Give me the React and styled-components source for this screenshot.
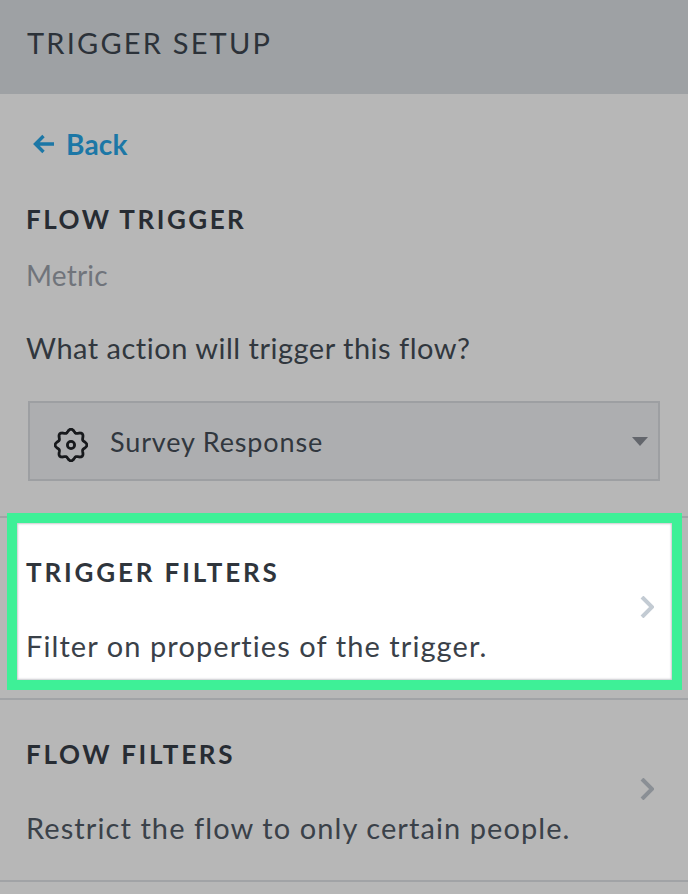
import React from "react";
import styled, { createGlobalStyle } from "styled-components";

const GlobalStyle = createGlobalStyle`
  html, body {
    margin: 0;
    padding: 0;
    background: #b7b7b7;
  }
  body {
    font-family: "Lato", "Open Sans", sans-serif;
    color: #2c3239;
  }
`;

const Page = styled.div`
  width: 688px;
  height: 894px;
  overflow: hidden;
  background: #b7b7b7;
`;

const Header = styled.header`
  height: 94px;
  background: #9ea1a4;
  display: flex;
  align-items: center;
  padding: 0 27px 9px;
  box-sizing: border-box;
  font-size: 29px;
  letter-spacing: 2.2px;
  color: #2c3239;
`;

const Top = styled.section`
  height: 422px;
  padding: 33px 28px 0 26px;
  box-sizing: border-box;
`;

const BackLink = styled.a`
  display: flex;
  align-items: center;
  gap: 11px;
  height: 34px;
  padding-left: 7px;
  font-size: 28px;
  font-weight: 700;
  letter-spacing: 0.2px;
  color: #1c77a6;
`;

const SectionTitle = styled.h2`
  margin: 0;
  font-size: 26px;
  line-height: 34px;
  font-weight: 700;
  letter-spacing: ${(p) => p.$spacing || 2.5}px;
  color: ${(p) => p.$color || "#272c33"};
`;

const FlowTitle = styled(SectionTitle)`
  margin-top: 41px;
`;

const Muted = styled.div`
  margin-top: 22px;
  font-size: 28px;
  line-height: 34px;
  letter-spacing: 0.2px;
  color: #70747b;
`;

const Question = styled.div`
  margin-top: 39px;
  font-size: 29px;
  line-height: 34px;
  letter-spacing: 0.5px;
  color: #31373e;
`;

const Select = styled.div`
  margin: 36px 0 0 2px;
  height: 80px;
  width: 632px;
  box-sizing: border-box;
  border: 2px solid #9d9fa2;
  background: #adaeb0;
  display: flex;
  align-items: center;
  padding: 0 10px 0 24px;
  font-size: 27px;
  letter-spacing: 0.85px;
  color: #31373e;
`;

const SelectLabel = styled.span`
  flex: 1;
  margin-left: 22px;
`;

const Caret = styled.span`
  width: 0;
  height: 0;
  border-left: 8px solid transparent;
  border-right: 8px solid transparent;
  border-top: 9px solid #63666c;
`;

const Row = styled.div`
  position: relative;
  height: 182px;
  box-sizing: border-box;
  border-top: 2px solid #a1a3a6;
  display: flex;
  align-items: center;
  justify-content: space-between;
  padding: 0 34px 2px 26px;
`;

const LastRow = styled(Row)`
  border-bottom: 2px solid #a1a3a6;
  height: 184px;
`;

const Highlight = styled.div`
  position: absolute;
  left: 7px;
  right: 6px;
  top: -5px;
  height: 177px;
  box-sizing: border-box;
  border: 10px solid #3ef097;
  background: #fff;
  box-shadow: inset 0 0 2px 1px #c9c9cf;
`;

const RowText = styled.div`
  position: relative;
  display: flex;
  flex-direction: column;
  gap: 40px;
  margin-top: 3px;
`;

const RowDescription = styled.div`
  font-size: 29px;
  line-height: 34px;
  letter-spacing: 1.08px;
  color: #3a4149;
`;

const Chevron = styled.svg`
  position: relative;
  width: 14px;
  height: 22px;
  fill: none;
  stroke: ${(p) => p.$color};
  stroke-width: 4;
`;

const GearSvg = styled.svg`
  margin-top: 8px;
  flex: none;
`;

// eight soft lobes round the outline of the gear
const gearPath = () => {
  const points = [];
  for (let i = 0; i < 96; i++) {
    const angle = (i / 96) * Math.PI * 2;
    const radius = 14.3 + 1.6 * Math.cos(angle * 8);
    points.push(`${(17 + radius * Math.sin(angle)).toFixed(2)} ${(17 - radius * Math.cos(angle)).toFixed(2)}`);
  }
  return `M${points.join("L")}Z`;
};

const GearIcon = () => (
  <GearSvg width="34" height="34" viewBox="0 0 34 34" fill="none" stroke="#17191c" strokeWidth="2.8" strokeLinejoin="round">
    <path d={gearPath()} />
    <circle cx="17" cy="17" r="3.6" />
  </GearSvg>
);

const ChevronIcon = ({ color }) => (
  <Chevron viewBox="0 0 14 22" $color={color}>
    <path d="M2 1l10 10L2 21" />
  </Chevron>
);

export default function App() {
  return (
    <Page>
      <GlobalStyle />
      <Header>TRIGGER SETUP</Header>
      <Top>
        <BackLink>
          <svg width="22" height="20" viewBox="0 0 22 20" fill="none" stroke="#1c77a6" strokeWidth="3.4">
            <path d="M10.500 2L2.500 10l8 8M3 10h18" />
          </svg>
          Back
        </BackLink>
        <FlowTitle>FLOW TRIGGER</FlowTitle>
        <Muted>Metric</Muted>
        <Question>What action will trigger this flow?</Question>
        <Select>
          <GearIcon />
          <SelectLabel>Survey Response</SelectLabel>
          <Caret />
        </Select>
      </Top>
      <Row>
        <Highlight />
        <RowText>
          <SectionTitle $color="#2f353c" $spacing={2.85}>TRIGGER FILTERS</SectionTitle>
          <RowDescription>Filter on properties of the trigger.</RowDescription>
        </RowText>
        <ChevronIcon color="#c3cbd3" />
      </Row>
      <LastRow>
        <RowText>
          <SectionTitle $spacing={2.7}>FLOW FILTERS</SectionTitle>
          <RowDescription>Restrict the flow to only certain people.</RowDescription>
        </RowText>
        <ChevronIcon color="#8a8f95" />
      </LastRow>
    </Page>
  );
}
